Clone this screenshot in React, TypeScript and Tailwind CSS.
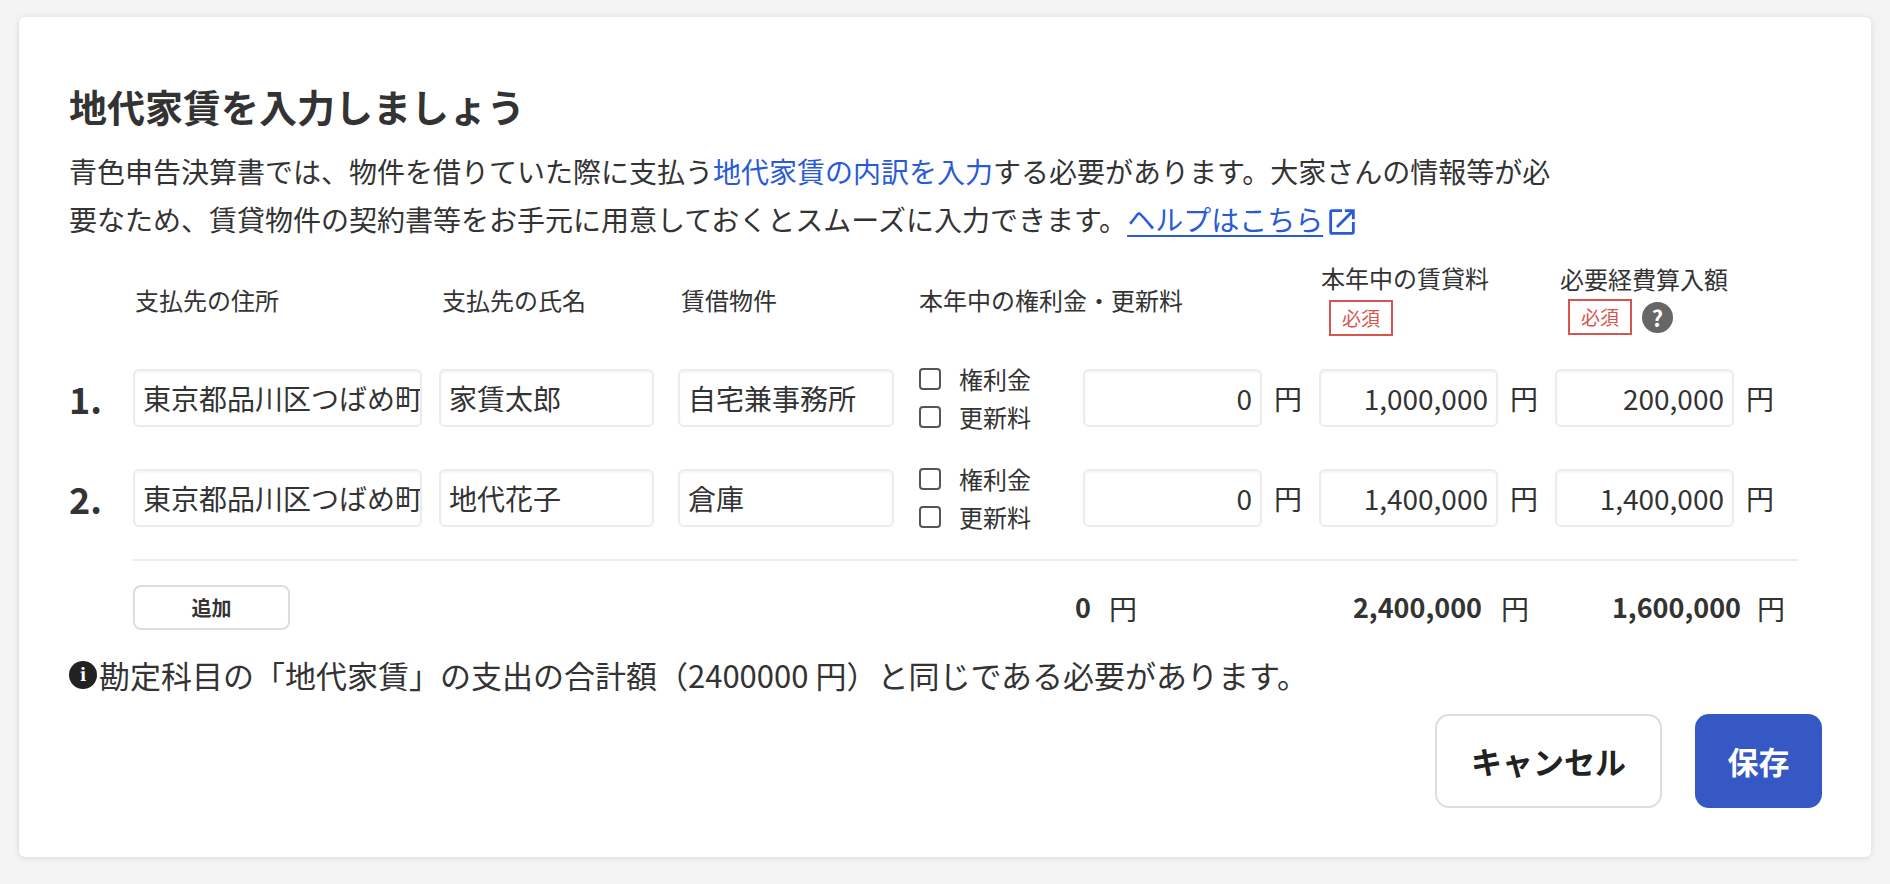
import React from 'react';

const font = { fontFamily: '"Noto Sans CJK JP", "Noto Sans", sans-serif' };

type Row = { addr: string; name: string; prop: string; fee: string; rent: string; exp: string };

const rows: Row[] = [
    { addr: '東京都品川区つばめ町', name: '家賃太郎', prop: '自宅兼事務所', fee: '0', rent: '1,000,000', exp: '200,000' },
    { addr: '東京都品川区つばめ町', name: '地代花子', prop: '倉庫', fee: '0', rent: '1,400,000', exp: '1,400,000' },
];

const inputCls = 'h-[58px] rounded-md border-2 border-[#ececec] bg-white px-2 text-[28px] text-[#333] outline-none shadow-[inset_0_2px_2px_rgba(0,0,0,0.04)] overflow-hidden whitespace-nowrap';

const Required = () => (
    <span className="inline-flex h-[36px] w-[64px] items-center justify-center border-2 border-[#d9534f] text-[19px] text-[#d9534f]">必須</span>
);

const Yen = ({ ml = 'ml-[12px]' }: { ml?: string }) => (
    <span className={`${ml} w-[45px] text-[28px] text-[#333]`}>円</span>
);

const Checkbox = ({ label }: { label: string }) => (
    <label className="flex items-center gap-[18px] text-[24px] text-[#333] leading-[38px]">
        <span className="h-[22px] w-[22px] rounded-[4px] border-2 border-[#555] bg-white" />
        {label}
    </label>
);

const App: React.FC = () => {
    return (
        <div className="min-h-screen bg-[#f4f4f4] px-[19px] pt-[17px]" style={font}>
            <div className="rounded-md bg-white shadow-[0_1px_6px_rgba(0,0,0,0.12)] pl-[50px] pr-[49px] pt-[67px] pb-[49px] text-[#333]">
                <h1 className="text-[38px] font-bold leading-[44px]">地代家賃を入力しましょう</h1>
                <p className="mt-[19px] w-[1495px] text-[28px] leading-[48px]">
                    青色申告決算書では、物件を借りていた際に支払う<span className="text-[#2a5bd7]">地代家賃の内訳を入力</span>する必要があります。大家さんの情報等が必要なため、賃貸物件の契約書等をお手元に用意しておくとスムーズに入力できます。
                    <a className="text-[#2a5bd7] underline underline-offset-4">ヘルプはこちら</a>
                    <svg viewBox="0 0 24 24" className="ml-[2px] inline h-[34px] w-[34px] align-[-8px] fill-[#2a5bd7]">
                        <path d="M19 19H5V5h7V3H5a2 2 0 0 0-2 2v14a2 2 0 0 0 2 2h14c1.1 0 2-.9 2-2v-7h-2v7zM14 3v2h3.59l-9.83 9.83 1.41 1.41L19 6.41V10h2V3h-7z" />
                    </svg>
                </p>

                {/* header */}
                <div className="mt-[22px] flex h-[70px] items-center text-[24px]">
                    <div className="w-[64px]" />
                    <div className="w-[306px] pl-[2px]">支払先の住所</div>
                    <div className="w-[239px] pl-[3px]">支払先の氏名</div>
                    <div className="w-[241px] pl-[3px]">賃借物件</div>
                    <div className="w-[400px]">本年中の権利金・更新料</div>
                    <div className="flex w-[240px] flex-col items-start gap-[6px] pl-[2px]">
                        <span className="leading-[28px]">本年中の賃貸料</span>
                        <span className="ml-[8px]"><Required /></span>
                    </div>
                    <div className="flex flex-col items-start gap-[6px] pl-[1px]">
                        <span className="leading-[28px]">必要経費算入額</span>
                        <span className="ml-[8px] flex items-center gap-[10px]">
                            <Required />
                            <span className="flex h-[31px] w-[31px] items-center justify-center rounded-full bg-[#666] text-[22px] font-bold text-white">?</span>
                        </span>
                    </div>
                </div>

                {rows.map((r, i) => (
                    <div key={i} className={`${i === 0 ? 'mt-[25px]' : 'mt-[24px]'} flex items-center`}>
                        <div className="w-[64px] text-[36px] font-bold">{i + 1}.</div>
                        <div className={`${inputCls} w-[289px] flex items-center`}>{r.addr}</div>
                        <div className={`${inputCls} ml-[17px] w-[215px] flex items-center`}>{r.name}</div>
                        <div className={`${inputCls} ml-[24px] w-[216px] flex items-center`}>{r.prop}</div>
                        <div className="ml-[25px] flex w-[164px] flex-col">
                            <Checkbox label="権利金" />
                            <Checkbox label="更新料" />
                        </div>
                        <div className={`${inputCls} w-[179px] flex items-center justify-end`}>{r.fee}</div>
                        <Yen />
                        <div className={`${inputCls} w-[179px] flex items-center justify-end`}>{r.rent}</div>
                        <Yen />
                        <div className={`${inputCls} w-[179px] flex items-center justify-end`}>{r.exp}</div>
                        <Yen />
                    </div>
                ))}

                <div className="ml-[64px] mt-[23px] w-[1665px] border-t-2 border-[#ececec]" />

                <div className="mt-[24px] flex items-center">
                    <div className="w-[64px]" />
                    <button className="h-[45px] w-[157px] rounded-lg border-2 border-[#ddd] bg-white text-[20px] font-bold">追加</button>
                    <div className="w-[801px] text-right text-[27px] font-bold">0</div>
                    <Yen ml="ml-[18px]" />
                    <div className="w-[328px] text-right text-[27px] font-bold">2,400,000</div>
                    <Yen ml="ml-[19px]" />
                    <div className="w-[195px] text-right text-[27px] font-bold">1,600,000</div>
                    <Yen ml="ml-[16px]" />
                </div>

                <div className="mt-[25px] flex items-center text-[31px] leading-[40px]">
                    <span className="mr-[2px] flex h-[28px] w-[28px] items-center justify-center rounded-full bg-[#222] font-serif text-[20px] font-bold text-white">i</span>
                    勘定科目の「地代家賃」の支出の合計額（2400000 円）と同じである必要があります。
                </div>

                <div className="mt-[19px] flex justify-end gap-[33px]">
                    <button className="h-[94px] w-[227px] rounded-[14px] border-2 border-[#ddd] bg-white text-[31px] font-bold text-[#222]">キャンセル</button>
                    <button className="h-[94px] w-[127px] rounded-[14px] bg-[#3558c4] text-[31px] font-bold text-white">保存</button>
                </div>
            </div>
        </div>
    );
};

export default App;
